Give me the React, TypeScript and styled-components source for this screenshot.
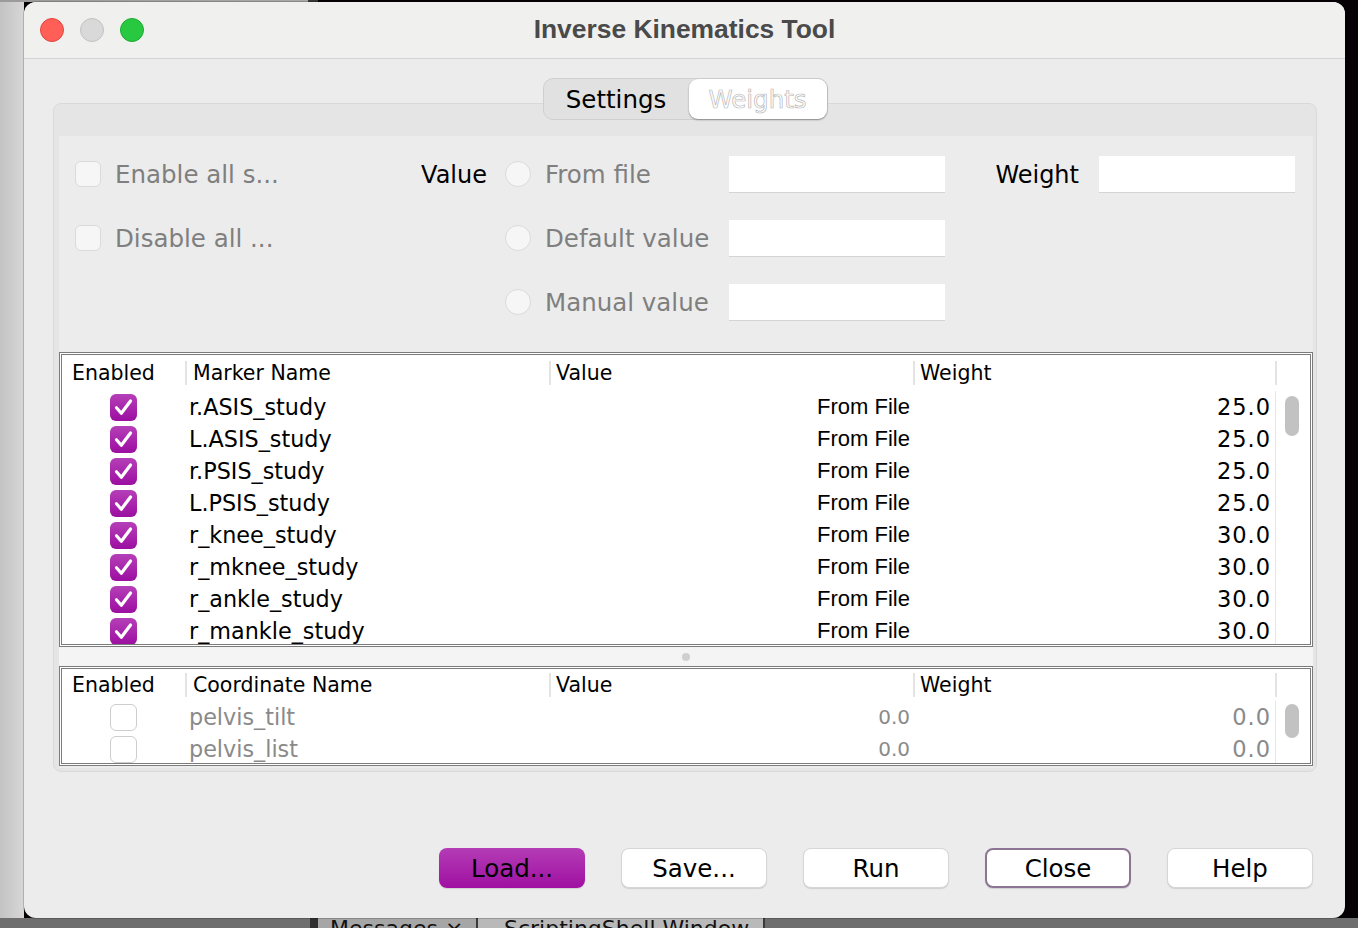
import styled, { createGlobalStyle } from "styled-components";

const UI = `"DejaVu Sans", "Noto Sans", sans-serif`;

const GlobalStyle = createGlobalStyle`
  html, body {
    margin: 0;
    padding: 0;
  }
  body {
    width: 1358px;
    height: 928px;
    overflow: hidden;
    background: #050104;
    font-family: ${UI};
  }
`;

const Desktop = styled.div`
  width: 1358px;
  height: 928px;
  display: flex;
  flex-direction: column;
  background: #050104;
  overflow: hidden;
`;

const TopStrip = styled.div`
  height: 2px;
  flex: none;
  background: linear-gradient(to right, #9a9a9a 0, #a9a9a9 308px, #3a3a3a 308px, #3a3a3a 318px, #060104 318px);
`;

const Middle = styled.div`
  height: 916px;
  flex: none;
  display: flex;
`;

const LeftGutter = styled.div`
  width: 24px;
  flex: none;
  background: linear-gradient(to right, #c3c3c3, #d7d7d7);
`;

const Window = styled.div`
  width: 1321px;
  flex: none;
  display: flex;
  flex-direction: column;
  background: #ececec;
  border-radius: 12px;
  overflow: hidden;
  box-shadow: 0 0 0 1px rgba(0, 0, 0, 0.18);
  position: relative;
  z-index: 1;
`;

const TitleBar = styled.div`
  height: 56px;
  flex: none;
  display: grid;
  grid-template-columns: 1fr auto 1fr;
  align-items: center;
  padding: 0 16px;
  background: #f0f0ef;
  border-bottom: 1px solid #d3d3d3;
`;

const Lights = styled.div`
  display: flex;
  gap: 16px;
`;

const Light = styled.span<{ $fill: string; $edge: string }>`
  width: 24px;
  height: 24px;
  box-sizing: border-box;
  border-radius: 50%;
  background: ${(p) => p.$fill};
  border: 1px solid ${(p) => p.$edge};
`;

const Title = styled.div`
  font-family: "Liberation Sans", Arial, sans-serif;
  font-weight: bold;
  font-size: 26.4px;
  color: #4a4a4a;
  padding-bottom: 2px;
`;

const Body = styled.div`
  flex: 1;
  display: flex;
  flex-direction: column;
  padding: 19px 28px 30px 29px;
`;

const Segmented = styled.div`
  align-self: center;
  display: flex;
  height: 42px;
  box-sizing: border-box;
  margin-bottom: -17px;
  position: relative;
  z-index: 2;
  background: #e1e1e1;
  border: 1px solid #cfcfcf;
  border-radius: 10px;
`;

const Segment = styled.div<{ $active?: boolean }>`
  width: ${(p) => (p.$active ? "138px" : "145px")};
  display: flex;
  align-items: center;
  justify-content: center;
  font-size: 24.5px;
  border-radius: 9px;
  color: ${(p) => (p.$active ? "#ffffff" : "#000000")};
  background: ${(p) => (p.$active ? "#ffffff" : "transparent")};
  box-shadow: ${(p) => (p.$active ? "0 1px 2px rgba(0,0,0,0.35)" : "none")};
  -webkit-text-stroke: ${(p) => (p.$active ? "0.7px #b8b8b8" : "0")};
`;

const Panel = styled.div`
  height: 669px;
  box-sizing: border-box;
  display: flex;
  flex-direction: column;
  padding: 32px 3px 3px 5px;
  background: #e5e5e5;
  border: 1px solid #d9d9d9;
  border-radius: 8px;
`;

const Content = styled.div`
  flex: 1;
  display: flex;
  flex-direction: column;
  background: #ececec;
`;

const Form = styled.div`
  display: grid;
  grid-template-columns: 330px 90px 234px 216px 154px 196px;
  grid-template-rows: repeat(3, 36px);
  row-gap: 28px;
  align-items: center;
  padding: 20px 0 32px 16px;
`;

const Option = styled.label<{ $indent?: number }>`
  display: flex;
  align-items: center;
  gap: 14px;
  padding-left: ${(p) => p.$indent ?? 0}px;
  font-size: 24.5px;
  color: #7f7f7f;
  white-space: nowrap;
`;

const Box = styled.span<{ $round?: boolean }>`
  width: 26px;
  height: 26px;
  box-sizing: border-box;
  flex: none;
  background: #f6f6f6;
  border: 1px solid #dadada;
  border-radius: ${(p) => (p.$round ? "50%" : "6px")};
`;

const FieldLabel = styled.span<{ $gap: number }>`
  justify-self: end;
  padding-right: ${(p) => p.$gap}px;
  padding-top: 2px;
  font-size: 24px;
  color: #000;
`;

const Field = styled.div`
  height: 36px;
  background: #ffffff;
  box-shadow: 0 1px 0 #d4d4d4;
`;

const TableBox = styled.div<{ $h: number }>`
  height: ${(p) => p.$h}px;
  box-sizing: border-box;
  flex: none;
  display: flex;
  flex-direction: column;
  border: 3px double #7b7b7b;
  background: #ffffff;
  overflow: hidden;
`;

const cols = "123px 364px 364px 362px";

const HeaderRow = styled.div<{ $h: number }>`
  height: ${(p) => p.$h}px;
  flex: none;
  display: grid;
  grid-template-columns: ${cols} 35px;
  align-items: center;
`;

const HeaderCell = styled.div<{ $first?: boolean; $pad: number }>`
  height: 24px;
  display: flex;
  align-items: center;
  padding-left: ${(p) => p.$pad}px;
  border-left: ${(p) => (p.$first ? "none" : "2px solid #e3e3e3")};
  font-size: 20.5px;
  color: #000;
  white-space: nowrap;
`;

const RowsArea = styled.div`
  flex: 1;
  display: flex;
  overflow: hidden;
`;

const Rows = styled.div`
  flex: 1;
  display: flex;
  flex-direction: column;
`;

const Row = styled.div`
  height: 32px;
  flex: none;
  display: grid;
  grid-template-columns: ${cols};
  align-items: center;
`;

const CheckCell = styled.div`
  display: flex;
  justify-content: center;
`;

const Check = styled.span<{ $on: boolean }>`
  width: 27px;
  height: 27px;
  box-sizing: border-box;
  display: flex;
  align-items: center;
  justify-content: center;
  border-radius: 6px;
  background: ${(p) => (p.$on ? "linear-gradient(#b540b8, #9c0ea0)" : "#ffffff")};
  border: ${(p) => (p.$on ? "none" : "1px solid #cdcdcd")};
`;

const NameCell = styled.div<{ $dim?: boolean }>`
  padding-left: 4px;
  font-size: 22.3px;
  color: ${(p) => (p.$dim ? "#8a8a8a" : "#000")};
  white-space: nowrap;
`;

const ValueCell = styled.div<{ $dim?: boolean }>`
  text-align: right;
  padding-right: 3px;
  font-family: ${(p) => (p.$dim ? UI : `"Liberation Sans", Arial, sans-serif`)};
  font-size: ${(p) => (p.$dim ? "20px" : "22px")};
  color: ${(p) => (p.$dim ? "#8a8a8a" : "#000")};
`;

const WeightCell = styled.div<{ $dim?: boolean }>`
  text-align: right;
  padding-right: 4px;
  font-size: 22.5px;
  letter-spacing: 1px;
  color: ${(p) => (p.$dim ? "#8a8a8a" : "#000")};
`;

const ScrollTrack = styled.div`
  width: 35px;
  flex: none;
  box-sizing: border-box;
  border-left: 1px solid #e8e8e8;
`;

const Thumb = styled.div<{ $top: number; $h: number }>`
  width: 14px;
  height: ${(p) => p.$h}px;
  margin: ${(p) => p.$top}px 0 0 9px;
  border-radius: 7px;
  background: #c2c2c2;
`;

const Divider = styled.div`
  height: 19px;
  flex: none;
  display: flex;
  align-items: center;
  justify-content: center;
  background: #f4f4f4;
`;

const Grip = styled.span`
  width: 8px;
  height: 8px;
  border-radius: 50%;
  background: #cfcfcf;
`;

const Buttons = styled.div`
  margin-top: 76px;
  display: flex;
  justify-content: flex-end;
  gap: 36px;
  padding-right: 4px;
`;

const Button = styled.button<{ $variant?: "primary" | "focus" }>`
  width: 146px;
  height: 40px;
  box-sizing: border-box;
  font-family: ${UI};
  font-size: 24.5px;
  color: #000;
  border-radius: 8px;
  padding: 0;
  background: ${(p) => (p.$variant === "primary" ? "linear-gradient(#b43cb6, #a010a2)" : "#ffffff")};
  border: ${(p) =>
    p.$variant === "primary" ? "none" : p.$variant === "focus" ? "2px solid #8d7593" : "1px solid #d6d6d6"};
  box-shadow: 0 1px 1px rgba(0, 0, 0, 0.12);
`;

const BottomStrip = styled.div`
  flex: 1;
  display: flex;
  padding-left: 310px;
  background: #6e6e6e;
  overflow: hidden;
`;

const DockEdge = styled.div`
  width: 8px;
  background: #2f2f2f;
`;

const DockTab = styled.div<{ $w: number; $bg: string; $pad: number }>`
  width: ${(p) => p.$w}px;
  box-sizing: border-box;
  padding-left: ${(p) => p.$pad}px;
  background: ${(p) => p.$bg};
  border-right: 2px solid #3a3a3a;
  font-size: 22px;
  line-height: 22px;
  color: #111;
  white-space: nowrap;
  overflow: hidden;
`;

const markers: [string, string][] = [
  ["r.ASIS_study", "25.0"],
  ["L.ASIS_study", "25.0"],
  ["r.PSIS_study", "25.0"],
  ["L.PSIS_study", "25.0"],
  ["r_knee_study", "30.0"],
  ["r_mknee_study", "30.0"],
  ["r_ankle_study", "30.0"],
  ["r_mankle_study", "30.0"],
];

const coords = ["pelvis_tilt", "pelvis_list"];

const Tick = () => (
  <svg width="27" height="27" viewBox="0 0 27 27">
    <path d="M6.5 13.8 L11.3 19.2 L20.5 7" fill="none" stroke="#fff" strokeWidth="3.2" strokeLinecap="round" strokeLinejoin="round" />
  </svg>
);

const Header = ({ name, h }: { name: string; h: number }) => (
  <HeaderRow $h={h}>
    <HeaderCell $first $pad={10}>Enabled</HeaderCell>
    <HeaderCell $pad={6}>{name}</HeaderCell>
    <HeaderCell $pad={5}>Value</HeaderCell>
    <HeaderCell $pad={5}>Weight</HeaderCell>
    <HeaderCell $pad={0} />
  </HeaderRow>
);

const App = () => {
  return (
    <Desktop>
      <GlobalStyle />
      <TopStrip />
      <Middle>
        <LeftGutter />
        <Window>
          <TitleBar>
            <Lights>
              <Light $fill="#ff5f57" $edge="#e2463f" />
              <Light $fill="#d9d9d9" $edge="#c2c2c2" />
              <Light $fill="#28c840" $edge="#1eaa32" />
            </Lights>
            <Title>Inverse Kinematics Tool</Title>
            <span />
          </TitleBar>
          <Body>
            <Segmented>
              <Segment>Settings</Segment>
              <Segment $active>Weights</Segment>
            </Segmented>
            <Panel>
              <Content>
                <Form>
                  <Option>
                    <Box />
                    Enable all s...
                  </Option>
                  <FieldLabel $gap={8}>Value</FieldLabel>
                  <Option $indent={10}>
                    <Box $round />
                    From file
                  </Option>
                  <Field />
                  <FieldLabel $gap={20}>Weight</FieldLabel>
                  <Field />

                  <Option>
                    <Box />
                    Disable all ...
                  </Option>
                  <span />
                  <Option $indent={10}>
                    <Box $round />
                    Default value
                  </Option>
                  <Field />
                  <span />
                  <span />

                  <span />
                  <span />
                  <Option $indent={10}>
                    <Box $round />
                    Manual value
                  </Option>
                  <Field />
                </Form>

                <TableBox $h={295}>
                  <Header name="Marker Name" h={36} />
                  <RowsArea>
                    <Rows>
                      {markers.map(([name, w]) => (
                        <Row key={name}>
                          <CheckCell>
                            <Check $on>
                              <Tick />
                            </Check>
                          </CheckCell>
                          <NameCell>{name}</NameCell>
                          <ValueCell>From File</ValueCell>
                          <WeightCell>{w}</WeightCell>
                        </Row>
                      ))}
                    </Rows>
                    <ScrollTrack>
                      <Thumb $top={5} $h={40} />
                    </ScrollTrack>
                  </RowsArea>
                </TableBox>

                <Divider>
                  <Grip />
                </Divider>

                <TableBox $h={100}>
                  <Header name="Coordinate Name" h={32} />
                  <RowsArea>
                    <Rows>
                      {coords.map((name) => (
                        <Row key={name}>
                          <CheckCell>
                            <Check $on={false} />
                          </CheckCell>
                          <NameCell $dim>{name}</NameCell>
                          <ValueCell $dim>0.0</ValueCell>
                          <WeightCell $dim>0.0</WeightCell>
                        </Row>
                      ))}
                    </Rows>
                    <ScrollTrack>
                      <Thumb $top={3} $h={34} />
                    </ScrollTrack>
                  </RowsArea>
                </TableBox>
              </Content>
            </Panel>
            <Buttons>
              <Button $variant="primary">Load...</Button>
              <Button>Save...</Button>
              <Button>Run</Button>
              <Button $variant="focus">Close</Button>
              <Button>Help</Button>
            </Buttons>
          </Body>
        </Window>
      </Middle>
      <BottomStrip>
        <DockEdge />
        <DockTab $w={160} $bg="#a6a6a6" $pad={12}>Messages ×</DockTab>
        <DockTab $w={287} $bg="#b9b9b9" $pad={26}>ScriptingShell Window</DockTab>
      </BottomStrip>
    </Desktop>
  );
};

export default App;
